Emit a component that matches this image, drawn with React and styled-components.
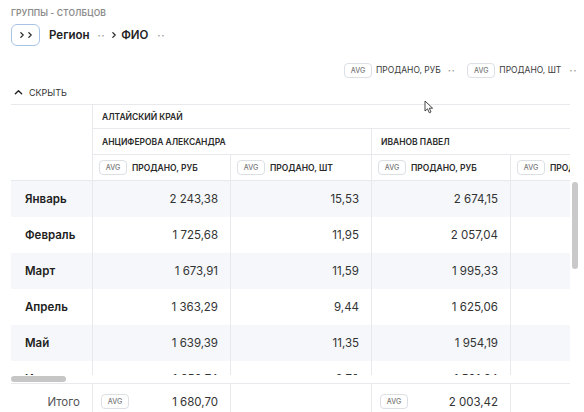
import React from 'react';
import styled, { createGlobalStyle } from 'styled-components';

const GlobalStyle = createGlobalStyle`
  * { box-sizing: border-box; }
  body {
    margin: 0;
    background: #fff;
    font-family: Inter, 'Noto Sans', sans-serif;
    color: #222;
  }
`;

const Page = styled.div`
  position: relative;
  width: 584px;
  height: 412px;
  padding: 8px 7px 0 11px;
  overflow: hidden;
`;

const Caption = styled.div`
  font-size: 8.5px;
  font-weight: 600;
  color: #8c8c8c;
  letter-spacing: 0.1px;
  line-height: 11px;
`;

const GroupRow = styled.div`
  display: flex;
  align-items: center;
  height: 22px;
  margin-top: 5px;
`;

const ExpandButton = styled.div`
  width: 29px;
  height: 22px;
  border: 1px solid #a9c3e6;
  border-radius: 6px;
  display: flex;
  align-items: center;
  justify-content: center;
  margin-right: 9px;
`;

const GroupName = styled.span`
  font-size: 11.5px;
  font-weight: 600;
  color: #222;
  margin-left: ${(p) => p.$left ?? 0}px;
`;

const Dots = styled.span`
  color: #a6a6a6;
  font-size: 10px;
  font-weight: 700;
  letter-spacing: 0.5px;
  margin: 0 ${(p) => p.$gap ?? 8}px 0 ${(p) => p.$left ?? 10}px;
`;

const MeasureBar = styled.div`
  display: flex;
  justify-content: flex-end;
  align-items: center;
  height: 14px;
  margin-top: 17px;
`;

const Badge = styled.span`
  display: inline-flex;
  align-items: center;
  justify-content: center;
  width: 28px;
  height: 15px;
  border: 1px solid #dcdfe4;
  border-radius: 4px;
  font-size: 7px;
  font-weight: 500;
  color: #777;
  flex-shrink: 0;
  background: #fff;
`;

const MeasureName = styled.span`
  font-size: 8.5px;
  color: #3a3a3a;
  margin-left: 4px;
`;

const HideRow = styled.div`
  display: flex;
  align-items: center;
  gap: 6px;
  height: 12px;
  margin-top: 9px;
  padding-left: 3px;
  font-size: 9px;
  color: #333;
`;

const TableArea = styled.div`
  position: relative;
  width: 567px;
  margin-top: 6px;
`;

const Clip = styled.div`
  width: 559px;
  overflow: hidden;
`;

const Grid = styled.div`
  display: grid;
  grid-template-columns: 81px 138px 141px 139px 140px;
  grid-template-rows: 25px 26px 26px;
  width: 639px;
`;

const HeadCell = styled.div`
  grid-column: ${(p) => p.$col || 'auto'};
  grid-row: ${(p) => p.$row || 'auto'};
  display: flex;
  align-items: center;
  gap: 5px;
  padding-left: ${(p) => (p.$badge ? 6 : 9)}px;
  border-top: ${(p) => (p.$top ? '1px solid #e7e9ed' : 'none')};
  border-bottom: 1px solid #e7e9ed;
  border-left: ${(p) => (p.$first ? 'none' : '1px solid #e7e9ed')};
  font-size: 8.5px;
  font-weight: 600;
  color: #2a2a2a;
  white-space: nowrap;
`;

const Body = styled.div`
  height: 194px;
  overflow: hidden;
`;

const ScrollGap = styled.div`
  height: 8px;
`;

const Row = styled.div`
  display: grid;
  grid-template-columns: 81px 138px 141px 139px 140px;
  width: 639px;
  height: 36px;
  background: ${(p) => (p.$shade ? '#f5f7fa' : '#fff')};
`;

const MonthCell = styled.div`
  display: flex;
  align-items: center;
  padding-left: 14px;
  font-size: 11.5px;
  font-weight: 600;
  color: #222;
`;

const ValueCell = styled.div`
  display: flex;
  align-items: center;
  justify-content: flex-end;
  padding-right: 12px;
  border-left: 1px solid #e7e9ed;
  font-size: 11.5px;
  color: #333;
`;

const Footer = styled.div`
  display: grid;
  grid-template-columns: 81px 138px 141px 139px 140px;
  width: 639px;
  height: 36px;
  border-top: 1px solid #e7e9ed;
`;

const TotalLabel = styled.div`
  display: flex;
  align-items: center;
  justify-content: flex-end;
  padding-right: 12px;
  font-size: 11.5px;
  color: #555;
`;

const TotalCell = styled.div`
  display: flex;
  align-items: center;
  justify-content: space-between;
  padding: 0 12px 0 8px;
  border-left: 1px solid #e7e9ed;
  font-size: 11.5px;
  color: #333;
`;

const VScroll = styled.div`
  position: absolute;
  right: 0;
  top: 78px;
  width: 6px;
  height: 87px;
  border-radius: 3px;
  background: #c9c9c9;
`;

const HScroll = styled.div`
  position: absolute;
  left: 0;
  top: 272px;
  width: 55px;
  height: 6px;
  border-radius: 3px;
  background: #c6c6c6;
`;

const Cursor = styled.svg`
  position: absolute;
  left: 424px;
  top: 100px;
`;

const months = [
  ['Январь', '2 243,38', '15,53', '2 674,15'],
  ['Февраль', '1 725,68', '11,95', '2 057,04'],
  ['Март', '1 673,91', '11,59', '1 995,33'],
  ['Апрель', '1 363,29', '9,44', '1 625,06'],
  ['Май', '1 639,39', '11,35', '1 954,19'],
  ['Июнь', '1 650,74', '8,70', '1 591,64'],
];

const Chevron = ({ dir = 'right', size = 8 }) => (
  <svg width={size} height={size} viewBox="0 0 10 10" fill="none" stroke="#222" strokeWidth="1.5" strokeLinecap="round" strokeLinejoin="round">
    {dir === 'right' ? <path d="M3.5 2 L6.5 5 L3.5 8" /> : <path d="M1.5 6.5 L5 3 L8.5 6.5" />}
  </svg>
);

export default function App() {
  return (
    <Page>
      <GlobalStyle />
      <Caption>ГРУППЫ - СТОЛБЦОВ</Caption>
      <GroupRow>
        <ExpandButton>
          <Chevron />
          <Chevron />
        </ExpandButton>
        <GroupName>Регион</GroupName>
        <Dots $left={8} $gap={5}>··</Dots>
        <Chevron />
        <GroupName $left={3}>ФИО</GroupName>
        <Dots $left={9}>··</Dots>
      </GroupRow>

      <MeasureBar>
        <Badge>AVG</Badge>
        <MeasureName>ПРОДАНО, РУБ</MeasureName>
        <Dots $left={7} $gap={12}>··</Dots>
        <Badge>AVG</Badge>
        <MeasureName>ПРОДАНО, ШТ</MeasureName>
        <Dots $left={8} $gap={0}>··</Dots>
      </MeasureBar>

      <HideRow>
        <Chevron dir="up" size={9} />
        СКРЫТЬ
      </HideRow>

      <TableArea>
        <Clip>
          <Grid>
            <HeadCell $first $top $row="1 / 4" $col="1" />
            <HeadCell $top $col="2 / 6">АЛТАЙСКИЙ КРАЙ</HeadCell>
            <HeadCell $col="2 / 4">АНЦИФЕРОВА АЛЕКСАНДРА</HeadCell>
            <HeadCell $col="4 / 6">ИВАНОВ ПАВЕЛ</HeadCell>
            <HeadCell $badge><Badge>AVG</Badge>ПРОДАНО, РУБ</HeadCell>
            <HeadCell $badge><Badge>AVG</Badge>ПРОДАНО, ШТ</HeadCell>
            <HeadCell $badge><Badge>AVG</Badge>ПРОДАНО, РУБ</HeadCell>
            <HeadCell $badge><Badge>AVG</Badge>ПРОДАНО, ШТ</HeadCell>
          </Grid>
          <Body>
            {months.map(([m, a, b, c], i) => (
              <Row key={m} $shade={i % 2 === 0}>
                <MonthCell>{m}</MonthCell>
                <ValueCell>{a}</ValueCell>
                <ValueCell>{b}</ValueCell>
                <ValueCell>{c}</ValueCell>
                <ValueCell />
              </Row>
            ))}
          </Body>
          <ScrollGap />
          <Footer>
            <TotalLabel>Итого</TotalLabel>
            <TotalCell><Badge>AVG</Badge>1 680,70</TotalCell>
            <TotalCell />
            <TotalCell><Badge>AVG</Badge>2 003,42</TotalCell>
            <TotalCell />
          </Footer>
        </Clip>
        <VScroll />
        <HScroll />
      </TableArea>

      <Cursor width="10" height="14" viewBox="0 0 10 14">
        <path d="M1 1 L1 11 L3.5 8.8 L5.3 12.8 L7 12 L5.3 8.2 L8.6 8.2 Z" fill="#fff" stroke="#333" strokeWidth="0.9" strokeLinejoin="round" />
      </Cursor>
    </Page>
  );
}
